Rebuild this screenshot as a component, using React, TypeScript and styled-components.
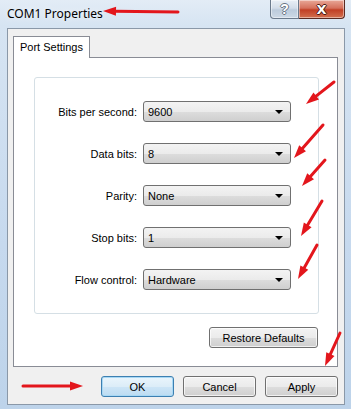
import React from 'react';
import styled, { createGlobalStyle } from 'styled-components';

const GlobalStyle = createGlobalStyle`
	html, body {
		margin: 0;
		padding: 0;
	}
	body {
		font-family: "Liberation Sans", Arial, sans-serif;
		font-size: 11px;
		color: #000;
	}
`;

const Window = styled.div`
	position: relative;
	width: 351px;
	height: 409px;
	overflow: hidden;
	display: flex;
	flex-direction: column;
	background: linear-gradient(180deg, #e3ecf6 0, #d6e4f2 26px, #c6d9ee 60%, #bdd3ea 100%);
`;

const TitleBar = styled.div`
	height: 28px;
	flex: none;
	display: flex;
	align-items: flex-start;
	padding: 0 6px 0 7px;
`;

const Title = styled.span`
	margin-top: 6px;
	font-family: "Noto Sans", "Liberation Sans", sans-serif;
	font-size: 12px;
	line-height: 16px;
	color: #000;
	text-shadow: 0 0 6px rgba(255, 255, 255, 0.9);
`;

const Caption = styled.div`
	margin-left: auto;
	display: flex;
`;

const CaptionButton = styled.div<{ $close?: boolean }>`
	height: 19px;
	width: ${p => (p.$close ? '46px' : '29px')};
	display: flex;
	align-items: center;
	justify-content: center;
	box-sizing: border-box;
	border: 1px solid ${p => (p.$close ? '#5a2a22' : '#6b7a8c')};
	border-top: none;
	border-left-width: ${p => (p.$close ? '0' : '1px')};
	border-radius: ${p => (p.$close ? '0 0 4px 0' : '0 0 0 4px')};
	background: ${p =>
		p.$close
			? 'linear-gradient(180deg, #e9a898 0, #d5705c 45%, #c13f25 55%, #d2704f 100%)'
			: 'linear-gradient(180deg, #e9eff6 0, #d3dde9 45%, #bccbdc 55%, #cdd9e6 100%)'};
	box-shadow: inset 0 0 0 1px rgba(255, 255, 255, 0.45);
	font-family: ${p => (p.$close ? '"DejaVu Sans", sans-serif' : '"Liberation Sans", sans-serif')};
	font-weight: bold;
	font-size: ${p => (p.$close ? '13px' : '14px')};
	line-height: 1;
	color: #fff;
	text-shadow: ${p =>
		p.$close
			? '1px 0 0 #4a1a12, -1px 0 0 #4a1a12, 0 1px 0 #4a1a12, 0 -1px 0 #4a1a12'
			: '1px 0 0 #6a7684, -1px 0 0 #6a7684, 0 1px 0 #6a7684, 0 -1px 0 #6a7684'};
`;

const Client = styled.div`
	flex: none;
	margin: 0 6px 0 7px;
	border: 1px solid #8a98a8;
	background: #f0f0f0;
	padding: 7px 6px 7px 5px;
	display: flex;
	flex-direction: column;
`;

const TabStrip = styled.div`
	height: 21px;
	display: flex;
	align-items: flex-end;
`;

const Tab = styled.div`
	position: relative;
	z-index: 1;
	width: 77px;
	height: 22px;
	box-sizing: border-box;
	margin-bottom: -1px;
	border: 1px solid #898c95;
	border-bottom: none;
	background: #fff;
	display: flex;
	align-items: center;
	justify-content: center;
	padding-bottom: 1px;
`;

const TabPage = styled.div`
	height: 310px;
	box-sizing: border-box;
	border: 1px solid #898c95;
	background: #fff;
	padding: 19px 18px 0 20px;
	display: flex;
	flex-direction: column;
`;

const Group = styled.div`
	border: 1px solid #d5dfe5;
	border-radius: 3px;
	padding: 23px 0;
	display: grid;
	grid-template-columns: 102px 148px;
	column-gap: 6px;
	row-gap: 21px;
	align-items: center;
`;

const Label = styled.label`
	text-align: right;
	white-space: nowrap;
`;

const Combo = styled.div`
	height: 21px;
	box-sizing: border-box;
	border: 1px solid #707070;
	border-radius: 3px;
	background: linear-gradient(180deg, #f3f3f3 0, #ebebeb 50%, #dddddd 51%, #cfcfcf 100%);
	display: flex;
	align-items: center;
	justify-content: space-between;
	padding-left: 4px;
`;

const Caret = styled.span`
	width: 0;
	height: 0;
	margin-right: 7px;
	border-left: 4px solid transparent;
	border-right: 4px solid transparent;
	border-top: 4px solid #000;
`;

const RestoreRow = styled.div`
	margin-top: 13px;
	display: flex;
	justify-content: flex-end;
	padding-right: 1px;
`;

const Button = styled.div<{ $default?: boolean; $w?: number }>`
	width: ${p => p.$w ?? 73}px;
	height: 21px;
	box-sizing: border-box;
	border: 1px solid ${p => (p.$default ? '#3c7fb1' : '#707070')};
	border-radius: 3px;
	background: ${p =>
		p.$default
			? 'linear-gradient(180deg, #eaf5fc 0, #dcedf8 50%, #cde5f6 51%, #bcdcf2 100%)'
			: 'linear-gradient(180deg, #f3f3f3 0, #ebebeb 50%, #dddddd 51%, #cfcfcf 100%)'};
	box-shadow: inset 0 0 0 1px ${p => (p.$default ? '#a8d8f4' : 'rgba(255,255,255,0.7)')};
	display: flex;
	align-items: center;
	justify-content: center;
`;

const ButtonRow = styled.div`
	margin-top: 9px;
	display: flex;
	justify-content: flex-end;
	gap: 9px;
`;

const Overlay = styled.svg`
	position: absolute;
	left: 0;
	top: 0;
	pointer-events: none;
`;

type Arrow = [number, number, number, number];

const arrows: Arrow[] = [
	[178, 12, 103, 11],
	[334, 82, 306, 104],
	[323, 125, 294, 158],
	[325, 160, 302, 186],
	[322, 201, 301, 236],
	[317, 245, 298, 279],
	[340, 333, 325, 366],
	[23, 386, 83, 386],
];

const arrowShape = ([x1, y1, x2, y2]: Arrow, i: number) => {
	const len = Math.hypot(x2 - x1, y2 - y1);
	const ux = (x2 - x1) / len;
	const uy = (y2 - y1) / len;
	const head = 13;
	const half = 4.5;
	const bx = x2 - ux * head;
	const by = y2 - uy * head;
	const pts = [
		[x2, y2],
		[bx - uy * half, by + ux * half],
		[bx + uy * half, by - ux * half],
	]
		.map(p => p.join(','))
		.join(' ');
	return (
		<g key={i}>
			<line x1={x1} y1={y1} x2={bx + ux} y2={by + uy} stroke="#e3161c" strokeWidth={3} strokeLinecap="round" />
			<polygon points={pts} fill="#e3161c" />
		</g>
	);
};

const fields = [
	['Bits per second:', '9600'],
	['Data bits:', '8'],
	['Parity:', 'None'],
	['Stop bits:', '1'],
	['Flow control:', 'Hardware'],
];

export default function App() {
	return (
		<Window>
			<GlobalStyle />
			<TitleBar>
				<Title>COM1 Properties</Title>
				<Caption>
					<CaptionButton>?</CaptionButton>
					<CaptionButton $close>X</CaptionButton>
				</Caption>
			</TitleBar>

			<Client>
				<TabStrip>
					<Tab>Port Settings</Tab>
				</TabStrip>
				<TabPage>
					<Group>
						{fields.map(([label, value]) => (
							<React.Fragment key={label}>
								<Label>{label}</Label>
								<Combo>
									<span>{value}</span>
									<Caret />
								</Combo>
							</React.Fragment>
						))}
					</Group>
					<RestoreRow>
						<Button $w={109}>Restore Defaults</Button>
					</RestoreRow>
				</TabPage>
				<ButtonRow>
					<Button $default>OK</Button>
					<Button>Cancel</Button>
					<Button>Apply</Button>
				</ButtonRow>
			</Client>

			<Overlay width={351} height={409} viewBox="0 0 351 409">
				{arrows.map(arrowShape)}
			</Overlay>
		</Window>
	);
}
